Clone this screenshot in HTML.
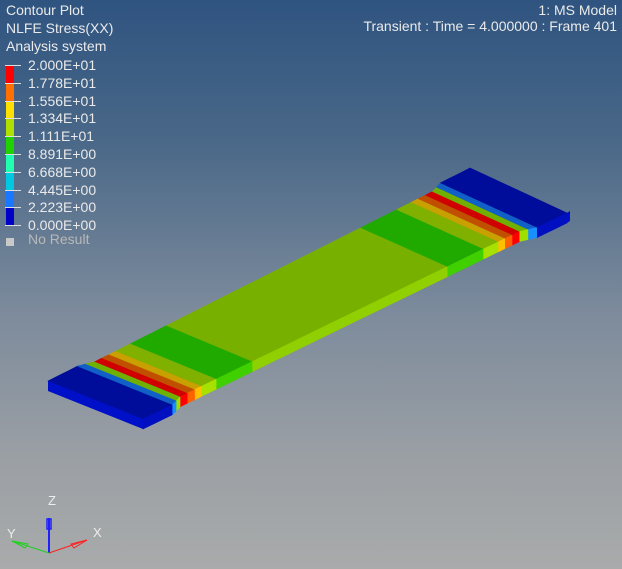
<!DOCTYPE html>
<html><head><meta charset="utf-8"><style>
html,body{margin:0;padding:0}
body{width:622px;height:569px;overflow:hidden;position:relative;font-family:"Liberation Sans",sans-serif;
background:linear-gradient(#2f5480 0%,#4a6888 25%,#7d8b9c 55%,#9a9fa4 80%,#a9abab 100%);color:#eaeaea}
.t{position:absolute;font-size:14px;line-height:18px;white-space:nowrap}
.leg{position:absolute;left:0;top:57px}
.row{position:absolute;left:28px;font-size:14px;white-space:nowrap}
.bar{position:absolute;left:6px;width:8px}
.tick{position:absolute;left:5px;width:16px;height:1px;background:#ddd}
</style></head><body>
<div class="t" style="left:6px;top:1px">Contour Plot</div>
<div class="t" style="left:6px;top:19px">NLFE Stress(XX)</div>
<div class="t" style="left:6px;top:37px">Analysis system</div>
<div class="t" style="right:5px;top:1px">1: MS Model</div>
<div class="t" style="right:5px;top:17px">Transient : Time = 4.000000 : Frame 401</div>
<div id="leg"></div>
<svg id="sv" width="622" height="569" style="position:absolute;left:0;top:0"></svg>
<script>
var leg=document.getElementById('leg');
var labels=["2.000E+01","1.778E+01","1.556E+01","1.334E+01","1.111E+01","8.891E+00","6.668E+00","4.445E+00","2.223E+00","0.000E+00"];
var cols=["#ff0000","#ff7000","#ffe000","#b0e000","#20d000","#20ffb0","#00c8e0","#1878ff","#0000c8"];
var h='';
for(var i=0;i<10;i++){var y=65+i*17.8;
 h+='<div class="row" style="top:'+(y-8)+'px">'+labels[i]+'</div>';
 h+='<div class="tick" style="top:'+y+'px"></div>';
 if(i<9)h+='<div class="bar" style="top:'+(y+1)+'px;height:16.8px;background:'+cols[i]+'"></div>';}
h+='<div style="position:absolute;left:6px;top:238px;width:8px;height:8px;background:#c8c8c8"></div>';
h+='<div class="row" style="top:231px;color:#b8b8b8">No Result</div>';
leg.innerHTML=h;

var sv=document.getElementById('sv'),s='';
function U(t){return [48+422*t,381-213*t];}
function W(t){return [95+2*t,38+7*t];}
function sc(t){var e=Math.min(t,1-t);if(e<0.07)return 1;if(e<0.1)return 1-0.1*(e-0.07)/0.03;return 0.9;}
function P(t,f){var u=U(t),w=W(t),k=sc(t),o=(1-k)/2;return [u[0]+w[0]*(o+k*f),u[1]+w[1]*(o+k*f)];}
var b=[[0,.07,"#000c9a"],[.07,.085,"#1060c8"],[.085,.1,"#70b000"],[.1,.117,"#d00000"],[.117,.134,"#c05000"],[.134,.15,"#c8a000"],[.15,.185,"#80b000"],[.185,.27,"#20aa00"],[.27,.73,"#78b000"],[.73,.815,"#20aa00"],[.815,.85,"#80b000"],[.85,.866,"#c8a000"],[.866,.883,"#c05000"],[.883,.9,"#d00000"],[.9,.915,"#70b000"],[.915,.93,"#1060c8"],[.93,1,"#000c9a"]];
function pt(p){return p[0].toFixed(1)+','+p[1].toFixed(1)+' ';}
function side(c){var m={"#000c9a":"#0010c0","#1060c8":"#1890ff","#70b000":"#a0e000","#d00000":"#ff0000","#c05000":"#ff6000","#c8a000":"#ffc000","#80b000":"#a8e000","#20aa00":"#40d000","#78b000":"#90d000"};return m[c]||c;}
b.forEach(function(x){
 var t0=x[0],t1=x[1],n=6,q='';
 for(var j=0;j<=n;j++)q+=pt(P(t0+(t1-t0)*j/n,0));
 for(var j=n;j>=0;j--)q+=pt(P(t0+(t1-t0)*j/n,1));
 s+='<polygon points="'+q+'" fill="'+x[2]+'" stroke="'+x[2]+'" stroke-width="0.6"/>';
 var r='';
 for(var j=0;j<=n;j++)r+=pt(P(t0+(t1-t0)*j/n,1));
 for(var j=n;j>=0;j--){var p=P(t0+(t1-t0)*j/n,1);r+=pt([p[0],p[1]+10]);}
 s+='<polygon points="'+r+'" fill="'+side(x[2])+'" stroke="'+side(x[2])+'" stroke-width="0.6"/>';
});
var a=P(0,0),c=P(0,1);
s+='<polygon points="'+pt(a)+pt(c)+pt([c[0],c[1]+10])+pt([a[0],a[1]+10])+'" fill="#0010c8"/>';
var a2=P(1,1);
s+='<polygon points="'+pt(a2)+pt([a2[0]+3,a2[1]-2])+pt([a2[0]+3,a2[1]+8])+pt([a2[0],a2[1]+10])+'" fill="#0010c8"/>';
// axes
s+='<line x1="49" y1="553" x2="49" y2="518" stroke="#2020ff" stroke-width="2"/>';
s+='<rect x="47" y="519" width="4" height="10" fill="none" stroke="#2020ff" stroke-width="1.5"/>';
s+='<line x1="49" y1="553" x2="12" y2="541" stroke="#20d020" stroke-width="1"/>';
s+='<polygon points="12,541 28,544 25,548" fill="none" stroke="#20d020"/>';
s+='<line x1="49" y1="553" x2="87" y2="540" stroke="#ff2020" stroke-width="1"/>';
s+='<polygon points="87,540 71,544 74,548" fill="none" stroke="#ff2020"/>';
s+='<text x="48" y="505" font-size="13" fill="#eee" font-family="Liberation Sans">Z</text>';
s+='<text x="7" y="538" font-size="13" fill="#eee" font-family="Liberation Sans">Y</text>';
s+='<text x="93" y="537" font-size="13" fill="#eee" font-family="Liberation Sans">X</text>';
sv.innerHTML=s;
</script>
</body></html>
